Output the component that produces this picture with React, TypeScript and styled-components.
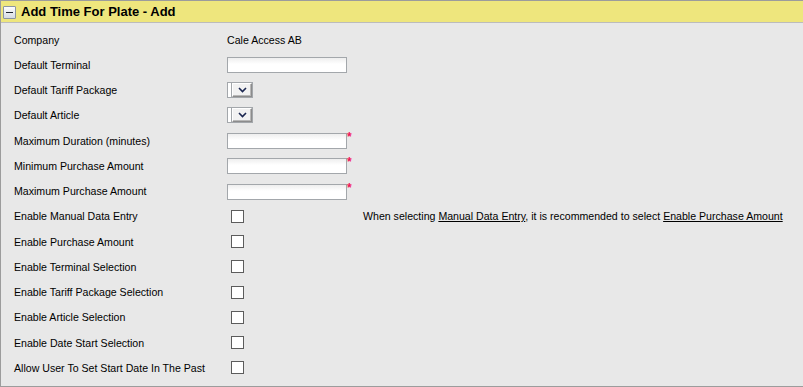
import React from "react";
import styled, { createGlobalStyle } from "styled-components";

const Global = createGlobalStyle`
  html, body { margin: 0; padding: 0; background: #ffffff; }
  body { font-family: "Liberation Sans", Arial, sans-serif; }
`;

const Panel = styled.div`
  box-sizing: border-box;
  width: 803px;
  height: 387px;
  border-top: 1px solid #9c9c9c;
  border-left: 1px solid #9c9c9c;
  border-bottom: 1px solid #9c9c9c;
  background: #e8e8e8;
  display: flex;
  flex-direction: column;
`;

const Header = styled.div`
  height: 21px;
  background: #eee67d;
  border-bottom: 1px solid #bcbcbc;
  display: flex;
  align-items: center;
  padding-left: 2px;
  gap: 5px;
`;

const Toggle = styled.span`
  box-sizing: border-box;
  width: 13px;
  height: 13px;
  margin-top: 1px;
  border: 1px solid #8a94a3;
  border-radius: 1px;
  background: linear-gradient(#fdfdfe, #d5dae3);
  display: flex;
  align-items: center;
  justify-content: center;
  &::after {
    content: "";
    width: 7px;
    height: 1px;
    background: #1e2430;
  }
`;

const Title = styled.span`
  font-size: 13px;
  font-weight: bold;
  color: #000;
  line-height: 21px;
`;

const Body = styled.div`
  padding: 4px 0 0 13px;
  display: flex;
  flex-direction: column;
`;

const Row = styled.div`
  display: grid;
  grid-template-columns: 213px 135px auto;
  height: 25.25px;
  align-items: center;
  font-size: 10.6px;
  color: #000;
`;

const Label = styled.span`
  white-space: nowrap;
`;

const Value = styled.div`
  display: flex;
  align-items: flex-start;
`;

const TextInput = styled.input`
  box-sizing: border-box;
  width: 120px;
  height: 16px;
  margin: 1px 0 0 0;
  padding: 0 2px;
  border: 1px solid #a3a7ab;
  background: linear-gradient(#eeeeee, #ffffff 6px);
  font-size: 11px;
  font-family: inherit;
  outline: none;
`;

const Required = styled.span`
  color: #f0145a;
  font-size: 12px;
  font-weight: bold;
  line-height: 11px;
  margin-left: 0;
`;

const SelectBox = styled.div`
  box-sizing: border-box;
  width: 26px;
  height: 16px;
  border: 1px solid #a3a7ab;
  background: #ffffff;
  display: flex;
  padding-left: 4px;
`;

const SelectButton = styled.div`
  flex: 1;
  box-sizing: border-box;
  border: 1px solid #8c8c8c;
  border-top-color: #fff;
  border-left-color: #fff;
  box-shadow: inset -1px -1px 0 #b8b8b8, -1px 0 0 #a3a7ab;
  background: #f2f2f2;
  display: flex;
  align-items: center;
  justify-content: center;
`;

const Check = styled.span`
  box-sizing: border-box;
  display: block;
  width: 13px;
  height: 13px;
  margin-left: 4px;
  border: 1px solid #5c5c5c;
  background: #ffffff;
`;

const Company = styled.span`
  font-size: 10.6px;
`;

const Note = styled.span`
  white-space: nowrap;
  font-size: 10.6px;
  margin-left: 1px;
  color: #000;
`;

const Link = styled.a`
  color: #000;
  text-decoration: underline;
`;

const Select = () => (
  <SelectBox>
    <SelectButton>
      <svg width="9" height="6" viewBox="0 0 9 6">
        <path d="M1 1 L4.5 4.5 L8 1" fill="none" stroke="#1a2650" strokeWidth="1.6" />
      </svg>
    </SelectButton>
  </SelectBox>
);

const textRows = [
  { label: "Maximum Duration (minutes)" },
  { label: "Minimum Purchase Amount" },
  { label: "Maximum Purchase Amount" },
];

const checkRows = [
  "Enable Manual Data Entry",
  "Enable Purchase Amount",
  "Enable Terminal Selection",
  "Enable Tariff Package Selection",
  "Enable Article Selection",
  "Enable Date Start Selection",
  "Allow User To Set Start Date In The Past",
];

export default function App() {
  return (
    <>
      <Global />
      <Panel>
        <Header>
          <Toggle />
          <Title>Add Time For Plate - Add</Title>
        </Header>
        <Body>
          <Row>
            <Label>Company</Label>
            <Value>
              <Company>Cale Access AB</Company>
            </Value>
          </Row>
          <Row>
            <Label>Default Terminal</Label>
            <Value>
              <TextInput />
            </Value>
          </Row>
          <Row>
            <Label>Default Tariff Package</Label>
            <Value>
              <Select />
            </Value>
          </Row>
          <Row>
            <Label>Default Article</Label>
            <Value>
              <Select />
            </Value>
          </Row>
          {textRows.map((r) => (
            <Row key={r.label}>
              <Label>{r.label}</Label>
              <Value>
                <TextInput />
                <Required>*</Required>
              </Value>
            </Row>
          ))}
          {checkRows.map((label, i) => (
            <Row key={label}>
              <Label>{label}</Label>
              <Value>
                <Check />
              </Value>
              {i === 0 && (
                <Note>
                  When selecting <Link>Manual Data Entry</Link>, it is recommended to select{" "}
                  <Link>Enable Purchase Amount</Link>
                </Note>
              )}
            </Row>
          ))}
        </Body>
      </Panel>
    </>
  );
}
